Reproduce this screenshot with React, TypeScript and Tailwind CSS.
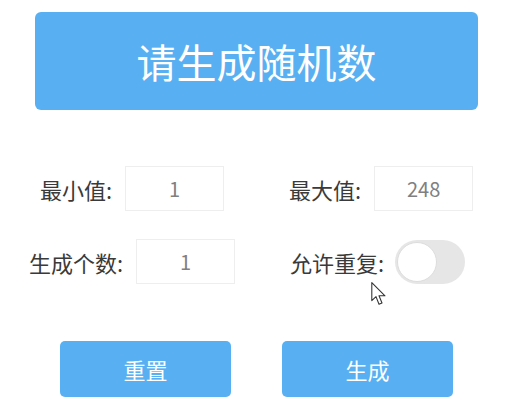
import { useState } from 'react'

const font = { fontFamily: '"Noto Sans CJK SC", "Noto Sans", sans-serif' }

function Field({ label, value, onChange }: { label: string; value: string; onChange: (v: string) => void }) {
  return (
    <div className="flex items-center gap-[13px]">
      <span className="text-[22px] leading-none text-[#3a3a3a]">{label}:</span>
      <input
        value={value}
        onChange={(e) => onChange(e.target.value)}
        className="h-[45px] w-[99px] border border-[#eeeeee] bg-white text-center text-[20px] text-[#808080] outline-none"
      />
    </div>
  )
}

export default function App() {
  const [min, setMin] = useState('1')
  const [max, setMax] = useState('248')
  const [count, setCount] = useState('1')
  const [repeat, setRepeat] = useState(false)

  return (
    <div className="relative h-[400px] w-[518px] overflow-hidden bg-white" style={font}>
      <div className="ml-[35px] mt-[12px] flex h-[98px] w-[443px] items-center justify-center rounded-[6px] bg-[#58b0f2]">
        <span className="text-[40px] leading-none text-white">请生成随机数</span>
      </div>

      <div className="mt-[56px] grid grid-cols-[264px_1fr] gap-y-[28px]">
        <div className="flex justify-center">
          <Field label="最小值" value={min} onChange={setMin} />
        </div>
        <div className="flex pl-[25px]">
          <Field label="最大值" value={max} onChange={setMax} />
        </div>
        <div className="flex justify-center">
          <Field label="生成个数" value={count} onChange={setCount} />
        </div>
        <div className="flex items-center gap-[11px] pl-[26px]">
          <span className="text-[22px] leading-none text-[#3a3a3a]">允许重复:</span>
          <button
            onClick={() => setRepeat(!repeat)}
            className={`flex h-[44px] w-[70px] items-center rounded-full px-[2px] ${repeat ? 'justify-end bg-[#58b0f2]' : 'justify-start bg-[#e6e6e6]'}`}
          >
            <span className="h-[40px] w-[40px] rounded-full border border-[#dddddd] bg-white" />
          </button>
        </div>
      </div>

      <div className="ml-[60px] mt-[57px] flex gap-[51px]">
        <button className="flex h-[56px] w-[171px] items-center justify-center rounded-[5px] bg-[#58b0f2] text-[22px] text-white">
          重置
        </button>
        <button className="flex h-[56px] w-[171px] items-center justify-center rounded-[5px] bg-[#58b0f2] text-[22px] text-white">
          生成
        </button>
      </div>

      {/* mouse pointer captured in the screenshot */}
      <svg className="absolute left-[371px] top-[282px]" width="16" height="24" viewBox="0 0 13 20">
        <path d="M0.5 0.5 L0.5 15.5 L4 12.2 L6.5 18.5 L9 17.5 L6.5 11.5 L11.5 11.5 Z" fill="#fff" stroke="#333" strokeWidth="0.9" strokeLinejoin="round" />
      </svg>
    </div>
  )
}
